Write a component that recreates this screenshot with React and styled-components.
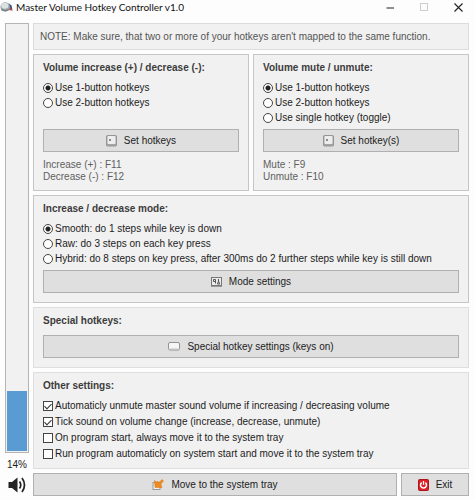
import React, { useState } from "react";
import styled, { createGlobalStyle } from "styled-components";

const VOLUME = 14;

const MODES = [
  "Smooth: do 1 steps while key is down",
  "Raw: do 3 steps on each key press",
  "Hybrid: do 8 steps on key press, after 300ms do 2 further steps while key is still down",
];

const SETTINGS = [
  { label: "Automaticly unmute master sound volume if increasing / decreasing volume", on: true },
  { label: "Tick sound on volume change (increase, decrease, unmute)", on: true },
  { label: "On program start, always move it to the system tray", on: false },
  { label: "Run program automaticly on system start and move it to the system tray", on: false },
];

function RadioGroup({ name, options, label }) {
  const [selected, setSelected] = useState(0);

  return (
    <Options role="radiogroup" aria-label={label}>
      {options.map((option, i) => (
        <Option key={option}>
          <Radio type="radio" name={name} checked={selected === i} onChange={() => setSelected(i)} />
          {option}
        </Option>
      ))}
    </Options>
  );
}

function KeyIcon() {
  return (
    <svg width="11" height="12" viewBox="0 0 11 12">
      <rect x="0.5" y="0.5" width="10" height="10.5" rx="1" fill="#a5a5a5" stroke="#959595" />
      <rect x="1.5" y="1" width="8" height="8" rx="1" fill="#ededed" />
      <rect x="3" y="4" width="2" height="2" fill="#8c8c8c" />
    </svg>
  );
}

function ModeIcon() {
  return (
    <svg width="11" height="10" viewBox="0 0 11 10">
      <rect x="0.5" y="0.5" width="10" height="8" fill="#ececec" stroke="#777" />
      <path d="M2.5 2.5h2v2h-2zM4.5 4v2.5M7.5 2v2M6.5 7l1-3 1.2 3z" fill="none" stroke="#555" />
      <path d="M0 9.5h11" stroke="#999" />
    </svg>
  );
}

function SpaceKeyIcon() {
  return (
    <svg width="12" height="9" viewBox="0 0 12 9">
      <rect x="0.5" y="0.5" width="11" height="7.5" rx="1.5" fill="#f6f6f6" stroke="#929292" />
      <path d="M1.5 7h9" stroke="#c4c4c4" />
    </svg>
  );
}

function TrayIcon() {
  return (
    <svg width="12" height="12" viewBox="0 0 12 12">
      <rect x="1" y="3.5" width="7" height="7" fill="#f2f2f2" stroke="#999" />
      <path d="M2.5 1.5l2 1.7 1 -1.2 1 1.8L10.2 0.5 11.5 2 8.8 5l1.2 3.5L3 8.5z" fill="#ef8b1f" stroke="#d67310" strokeWidth="0.5" />
    </svg>
  );
}

function PowerIcon() {
  return (
    <svg width="11" height="12" viewBox="0 0 11 12">
      <rect x="0.5" y="0.5" width="10" height="11" rx="1" fill="#dc1f26" stroke="#a9151b" />
      <path d="M3.6 3.6a3 3 0 1 0 3.8 0" fill="none" stroke="#fff" strokeWidth="1.5" />
      <path d="M5.5 2v3.8" stroke="#fff" strokeWidth="1.3" />
    </svg>
  );
}

function SpeakerIcon() {
  return (
    <svg width="18" height="18" viewBox="0 0 18 18">
      <path d="M0.5 6h3.5L9.5 1.5v15L4 12H0.5z" fill="#222" />
      <path d="M11.5 5.5q2.5 3.5 0 7M14 2q5 7 0 14" fill="none" stroke="#222" strokeWidth="1.7" />
    </svg>
  );
}

function AppIcon() {
  return (
    <svg width="13" height="12" viewBox="0 0 13 12">
      <path d="M8.5 2.5l4.2 7.3-3.5-.8z" fill="#c93a32" />
      <path d="M8.5 2l3 2.5 1 4.5-2-2z" fill="#2d4f85" />
      <ellipse cx="5.2" cy="6" rx="4.8" ry="4.7" fill="#9aa5a6" />
      <ellipse cx="4.8" cy="4.8" rx="3.6" ry="3" fill="#dce2e1" />
      <path d="M1 8.5q4 2.5 8.5 0" fill="none" stroke="#6c7879" />
    </svg>
  );
}

export default function App() {
  return (
    <Window>
      <GlobalStyle />
      <TitleBar>
        <AppIcon />
        <Title>Master Volume Hotkey Controller v1.0</Title>
        <WindowButton aria-label="Minimize">
          <svg width="9" height="9" viewBox="0 0 9 9"><path d="M0.5 5h7.5" stroke="#222" /></svg>
        </WindowButton>
        <WindowButton aria-label="Maximize" disabled>
          <svg width="9" height="9" viewBox="0 0 9 9"><rect x="0.5" y="0.5" width="7" height="7" fill="none" stroke="#ccc" /></svg>
        </WindowButton>
        <WindowButton aria-label="Close">
          <svg width="9" height="9" viewBox="0 0 9 9"><path d="M0.5 0.5l8 8M8.5 0.5l-8 8" stroke="#222" strokeWidth="1.1" /></svg>
        </WindowButton>
      </TitleBar>

      <Content>
        <VolumeColumn>
          <Meter role="meter" aria-label="Volume" aria-valuenow={VOLUME} aria-valuemin={0} aria-valuemax={100}>
            <MeterFill style={{ height: `${VOLUME}%` }} />
          </Meter>
          <Percent>{VOLUME}%</Percent>
          <MuteButton aria-label="Mute"><SpeakerIcon /></MuteButton>
        </VolumeColumn>

        <Panels>
          <Note>NOTE: Make sure, that two or more of your hotkeys aren't mapped to the same function.</Note>

          <Columns>
            <Panel>
              <Heading>Volume increase (+) / decrease (-):</Heading>
              <RadioGroup name="volume" label="Volume hotkeys" options={["Use 1-button hotkeys", "Use 2-button hotkeys"]} />
              <Button><KeyIcon />Set hotkeys</Button>
              <Readout>Increase (+) : F11<br />Decrease (-) : F12</Readout>
            </Panel>
            <Panel>
              <Heading>Volume mute / unmute:</Heading>
              <RadioGroup
                name="mute"
                label="Mute hotkeys"
                options={["Use 1-button hotkeys", "Use 2-button hotkeys", "Use single hotkey (toggle)"]}
              />
              <Button><KeyIcon />Set hotkey(s)</Button>
              <Readout>Mute : F9<br />Unmute : F10</Readout>
            </Panel>
          </Columns>

          <Panel>
            <Heading>Increase / decrease mode:</Heading>
            <RadioGroup name="mode" label="Mode" options={MODES} />
            <Button><ModeIcon />Mode settings</Button>
          </Panel>

          <Panel $light>
            <Heading $roomy>Special hotkeys:</Heading>
            <Button><SpaceKeyIcon />Special hotkey settings (keys on)</Button>
          </Panel>

          <Panel $light>
            <Heading>Other settings:</Heading>
            <Checks>
              {SETTINGS.map((s) => (
                <Option key={s.label} $tall>
                  <Checkbox type="checkbox" defaultChecked={s.on} />
                  {s.label}
                </Option>
              ))}
            </Checks>
          </Panel>

          <Footer>
            <Button><TrayIcon />Move to the system tray</Button>
            <Button><PowerIcon />Exit</Button>
          </Footer>
        </Panels>
      </Content>
    </Window>
  );
}

const GlobalStyle = createGlobalStyle`
  * {
    box-sizing: border-box;
  }
  body {
    margin: 0;
    background: #fdfdfd;
    color: #1c1c1c;
    font: 10px "Liberation Sans", Arial, sans-serif;
  }
  svg {
    display: block;
    flex: none;
  }
`;

const Window = styled.div`
  padding-bottom: 5px;
`;

const TitleBar = styled.header`
  display: flex;
  align-items: center;
  height: 14px;
  margin-bottom: 9px;
`;

const Title = styled.h1`
  flex: 1;
  margin: 0 0 0 3px;
  font: 10px/14px Lato, "Open Sans", sans-serif;
  color: #111;
`;

const WindowButton = styled.button`
  display: flex;
  align-items: center;
  justify-content: center;
  width: 34px;
  height: 14px;
  padding: 0;
  border: none;
  background: none;
`;

const Content = styled.main`
  display: flex;
  gap: 4px;
  padding: 0 6px 0 5px;
`;

const VolumeColumn = styled.aside`
  display: flex;
  flex-direction: column;
  width: 24px;
`;

const Meter = styled.div`
  display: flex;
  flex: 1;
  flex-direction: column;
  justify-content: flex-end;
  padding: 1px;
  border: 1px solid #b4b4b4;
  background: #f1f1f1;
`;

const MeterFill = styled.div`
  background: #5b9bd3;
`;

const Percent = styled.div`
  margin-top: 4px;
  line-height: 16px;
  text-align: center;
`;

const MuteButton = styled.button`
  display: flex;
  align-items: center;
  justify-content: center;
  height: 23px;
  padding: 0;
  border: none;
  background: none;
`;

const Panels = styled.div`
  display: flex;
  flex: 1;
  flex-direction: column;
  gap: 4px;
  min-width: 0;
`;

const Note = styled.p`
  margin: 0;
  padding: 0 6px;
  border: 1px solid #dcdcdc;
  background: #f1f1f1;
  color: #555;
  line-height: 25px;
`;

const Columns = styled.div`
  display: grid;
  grid-template-columns: 1fr 1fr;
  gap: 4px;
`;

const Panel = styled.section`
  display: flex;
  flex-direction: column;
  padding: 5px 9px 9px;
  border: 1px solid ${(p) => (p.$light ? "#dedede" : "#c6c6c6")};
  background: #f1f1f1;

  ${Columns} & {
    padding-bottom: 7px;
  }
`;

const Heading = styled.h2`
  margin: 0 0 ${(p) => (p.$roomy ? 6 : 4)}px;
  color: #3c3c3c;
  font-size: 10px;
  font-weight: bold;
  line-height: 16px;
`;

const Options = styled.div`
  flex: 1;
  min-height: 45px;
  margin-bottom: 4px;
`;

const Checks = styled.div`
  margin-bottom: -3px;
`;

const Option = styled.label`
  display: flex;
  align-items: center;
  gap: 2px;
  line-height: ${(p) => (p.$tall ? 16 : 15)}px;
  white-space: nowrap;
`;

const Radio = styled.input`
  appearance: none;
  flex: none;
  width: 10px;
  height: 10px;
  margin: 0;
  border: 1px solid #444;
  border-radius: 50%;
  background: #fff;

  &:checked {
    background: radial-gradient(circle, #222 0 2px, #fff 3px);
  }
`;

const Checkbox = styled.input`
  appearance: none;
  display: flex;
  justify-content: center;
  flex: none;
  width: 10px;
  height: 10px;
  margin: 0;
  border: 1px solid #444;
  background: #fff;

  &:checked::after {
    content: "";
    width: 3px;
    height: 6px;
    border: solid #333;
    border-width: 0 1px 1px 0;
    transform: rotate(45deg);
  }
`;

const Button = styled.button`
  display: flex;
  align-items: center;
  justify-content: center;
  gap: 7px;
  height: 23px;
  padding: 0;
  border: 1px solid #b0b0b0;
  background: #dfdfdf;
  color: #1c1c1c;
  font: inherit;
`;

const Readout = styled.p`
  margin: 7px 0 0;
  color: #606060;
  line-height: 12px;
`;

const Footer = styled.footer`
  display: grid;
  grid-template-columns: 1fr 68px;
  gap: 4px;
`;
